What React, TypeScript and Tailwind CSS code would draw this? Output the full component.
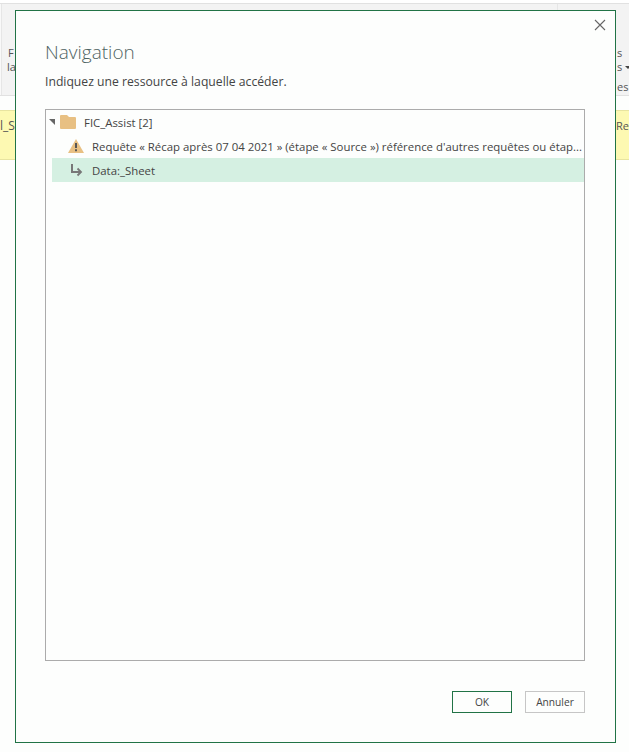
export default function App() {
  return (
    <div className="relative w-[629px] h-[752px] overflow-hidden bg-[#fdfefd] text-[#444444] font-['Open_Sans',sans-serif]">
      {/* page behind the dialog */}
      <div className="flex flex-col">
        <div className="h-[3px] bg-white" />
        <div className="relative h-[93px] border-y border-[#e1e1e1] bg-[#f3f3f3] flex justify-between text-[11px] leading-[14px] text-[#555555]">
          <div className="flex">
            <div className="w-[2px] bg-[#f9f9f9] border-r border-[#e6e6e6]" />
            <div className="pt-[42px] pl-[6px]">
              <div>F</div>
              <div className="-ml-px">la</div>
            </div>
          </div>
          <div className="absolute left-[557px] top-0 h-[8px] w-px bg-[#e6e6e6]" />
          <div className="w-[12px] pt-[42px]">
            <div>s</div>
            <div className="flex items-center">s<span className="ml-[3px] border-x-[3px] border-t-[3px] border-x-transparent border-t-[#444444]" /></div>
            <div className="mt-[6px]">es</div>
          </div>
        </div>
        <div className="mt-[14px] h-[50px] border-y border-[#e8e4a0] bg-[#fdf9b2] flex justify-between text-[12px] leading-[17px] text-[#555555]">
          <div className="pt-[6px]">l_S</div>
          <div className="pt-[6px] text-[11px] whitespace-nowrap">Re</div>
        </div>
      </div>
      {/* dialog */}
      <div className="absolute left-[15px] top-[10px] w-[601px] h-[733px] border border-[#217346] bg-[#fdfefd] pl-[29px] pr-[30px] flex flex-col">
        <button className="absolute right-[9px] top-[8px] text-[#666666]">
          <svg width="12" height="12" viewBox="0 0 12 12" fill="none" stroke="currentColor" strokeWidth="1.1">
            <path d="M1 1 L11 11 M11 1 L1 11" />
          </svg>
        </button>
        <h1 className="mt-[28px] text-[19px] leading-[26px] font-light text-[#4f6462]">Navigation</h1>
        <p className="mt-[8px] text-[12.2px] leading-[17px] text-[#444444]">Indiquez une ressource à laquelle accéder.</p>
        <div className="mt-[19px] h-[552px] border border-[#ababab] text-[11.4px] leading-[16px] flex flex-col">
          <div className="h-[24px] flex items-center">
            <span className="ml-[3px] w-0 h-0 border-l-[6px] border-t-[6px] border-l-transparent border-t-[#666666]" />
            <svg className="ml-[5px]" width="16" height="14" viewBox="0 0 16 14"><path d="M0 1 a1 1 0 0 1 1-1 h6 l2 2 h6 a1 1 0 0 1 1 1 v10 a1 1 0 0 1-1 1 h-14 a1 1 0 0 1-1-1 z" fill="#e8c083" /></svg>
            <span className="ml-[8px] pt-[1px]">FIC_Assist [2]</span>
          </div>
          <div className="h-[24px] flex items-center pl-[22px] whitespace-nowrap overflow-hidden">
            <svg width="16" height="14" viewBox="0 0 16 14"><path d="M8 0 L16 14 H0 Z" fill="#e8c083" /><path d="M7 4 h2 v5 h-2 z M7 10.2 h2 v2 h-2 z" fill="#555555" /></svg>
            <span className="ml-[8px] pt-[1px]">Requête « Récap après 07 04 2021 » (étape « Source ») référence d'autres requêtes ou étap...</span>
          </div>
          <div className="h-[24px] flex items-center pl-[16px] ml-[6px] bg-[#d5f0e2]">
            <svg width="16" height="14" viewBox="0 0 16 14" fill="none" stroke="#777777" strokeWidth="2"><path d="M4 1 V9 H12" /><path d="M9.5 5.5 L13 9 L9.5 12.5" strokeWidth="1.8" /></svg>
            <span className="ml-[8px] pt-[1px]">Data:_Sheet</span>
          </div>
        </div>
        <div className="mt-[30px] flex justify-end gap-[13px] text-[10.2px]">
          <button className="w-[60px] h-[22px] pt-[1px] border border-[#217346] text-[#444444]">OK</button>
          <button className="w-[60px] h-[22px] pt-[1px] border border-[#c6c6c6] text-[#444444]">Annuler</button>
        </div>
      </div>
    </div>
  );
}
